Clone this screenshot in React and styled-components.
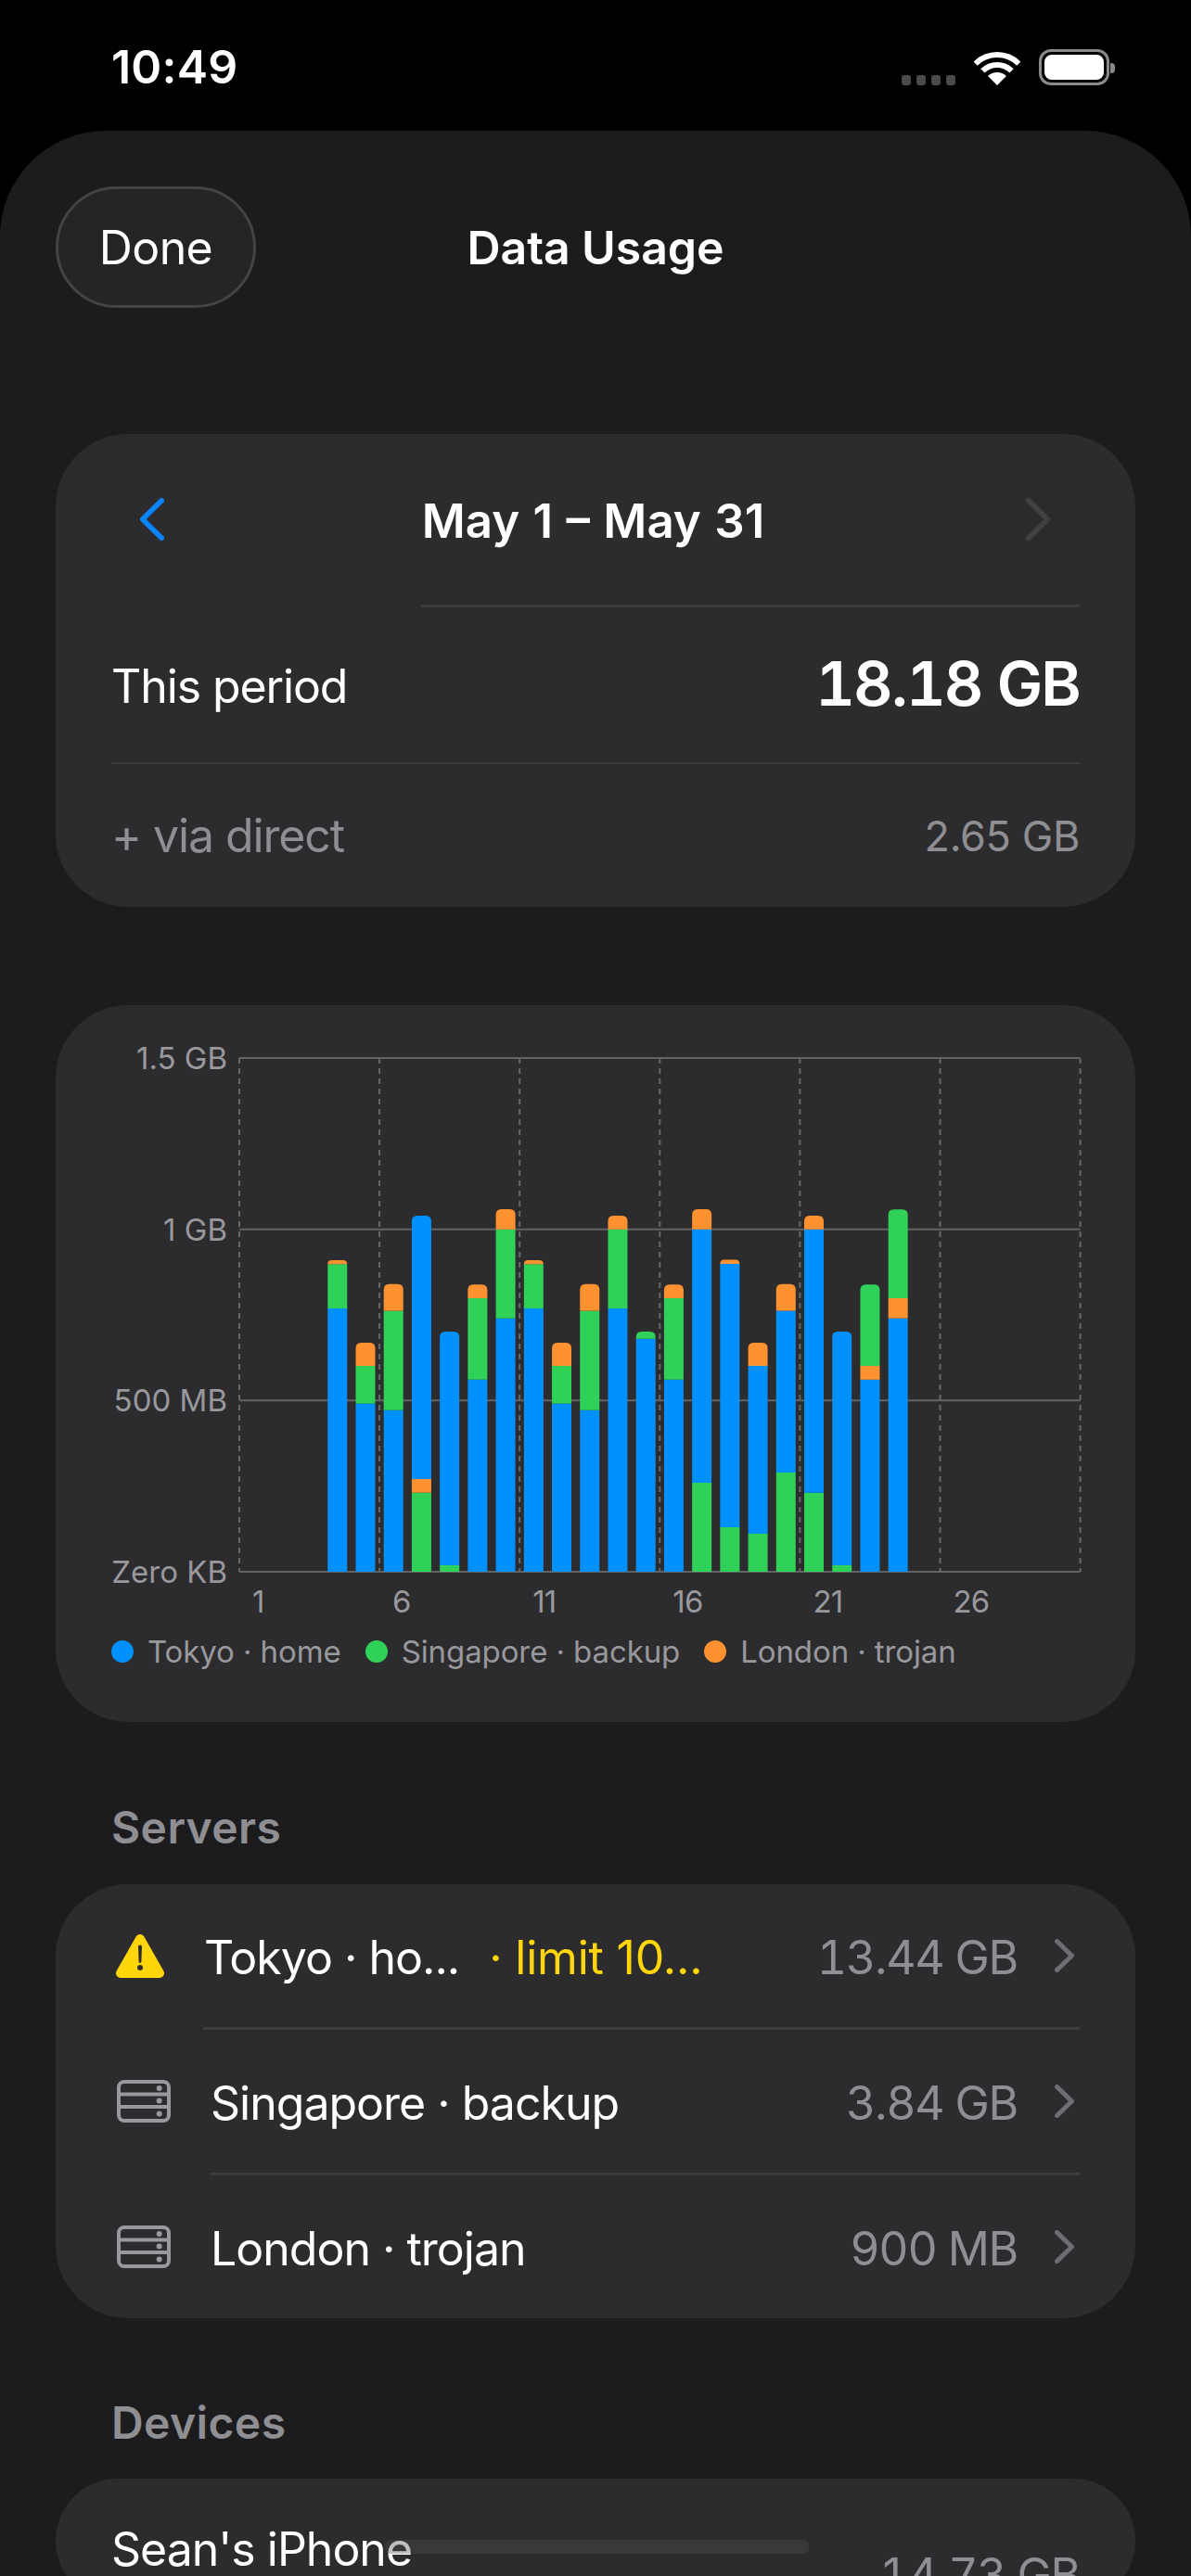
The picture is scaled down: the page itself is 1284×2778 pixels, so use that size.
import React from "react";
import styled, { createGlobalStyle } from "styled-components";

const BLUE = "#0091ff";
const GREEN = "#30d158";
const ORANGE = "#ff9230";

// MB per day, bottom of the stack first
const B = (mb) => [BLUE, mb];
const G = (mb) => [GREEN, mb];
const O = (mb) => [ORANGE, mb];

const days = [
  [B(769), G(129), O(12)],
  [B(491), G(110), O(68)],
  [B(472), G(290), O(78)],
  [G(231), O(40), B(769)],
  [G(19), B(682)],
  [B(561), G(238), O(40)],
  [B(740), G(260), O(59)],
  [B(769), G(129), O(12)],
  [B(491), G(110), O(68)],
  [B(472), G(290), O(78)],
  [B(769), G(231), O(40)],
  [B(680), G(21)],
  [B(561), G(238), O(40)],
  [G(260), B(740), O(59)],
  [G(130), B(769), O(12)],
  [G(111), B(490), O(68)],
  [G(290), B(472), O(78)],
  [G(231), B(769), O(40)],
  [G(19), B(682)],
  [B(561), O(40), G(238)],
  [B(740), O(59), G(259)],
];

const PLOT_W = 906.6;
const PLOT_H = 554;
const COL = PLOT_W / 6;
const STEP = COL / 5;
const BAR_W = 21;
const PX_PER_MB = PLOT_H / 1500;

function topRounded(x, y, w, h, r) {
  const rr = Math.min(r, h);
  return `M${x} ${y + h}V${y + rr}Q${x} ${y} ${x + rr} ${y}H${x + w - rr}Q${x + w} ${y} ${x + w} ${y + rr}V${y + h}Z`;
}

function Chart() {
  const bars = [];
  days.forEach((stack, d) => {
    const x = (d + 3.5) * STEP - BAR_W / 2;
    let y = PLOT_H;
    stack.forEach(([color, mb], i) => {
      const h = mb * PX_PER_MB;
      y -= h;
      const last = i === stack.length - 1;
      bars.push(
        <path
          key={d + "-" + i}
          fill={color}
          d={last ? topRounded(x, y, BAR_W, h, 6) : `M${x} ${y}h${BAR_W}v${h}h${-BAR_W}Z`}
        />
      );
    });
  });

  return (
    <Plot width={PLOT_W} height={PLOT_H} viewBox={`0 0 ${PLOT_W} ${PLOT_H}`}>
      {[0, 1, 2, 3, 4, 5, 6].map((i) => (
        <line key={i} x1={i * COL} x2={i * COL} y1="0" y2={PLOT_H} stroke="#68686b" strokeWidth="2" strokeDasharray="6 5" />
      ))}
      {[0, 1, 2, 3].map((i) => (
        <line key={i} x1="0" x2={PLOT_W} y1={(i * PLOT_H) / 3} y2={(i * PLOT_H) / 3} stroke="#636365" strokeWidth="2" />
      ))}
      {bars}
    </Plot>
  );
}

function Chevron({ dir = "right", w, h, color, sw }) {
  const pts = dir === "right"
    ? `${sw / 2},${sw / 2} ${w - sw / 2},${h / 2} ${sw / 2},${h - sw / 2}`
    : `${w - sw / 2},${sw / 2} ${sw / 2},${h / 2} ${w - sw / 2},${h - sw / 2}`;
  return (
    <svg width={w} height={h} viewBox={`0 0 ${w} ${h}`}>
      <polyline points={pts} fill="none" stroke={color} strokeWidth={sw} strokeLinecap="round" strokeLinejoin="round" />
    </svg>
  );
}

function ServerIcon() {
  return (
    <svg width="58" height="46" viewBox="0 0 58 46">
      <rect x="2" y="2" width="54" height="42" rx="6" fill="none" stroke="#98989d" strokeWidth="4" />
      <path d="M2 15.5H56M2 29H56" stroke="#98989d" strokeWidth="4" />
      <circle cx="45.7" cy="9" r="3" fill="#98989d" />
      <circle cx="45.7" cy="22.5" r="3" fill="#98989d" />
      <circle cx="45.7" cy="36.5" r="3" fill="#98989d" />
    </svg>
  );
}

function WarningIcon() {
  return (
    <svg width="52" height="47" viewBox="0 0 52 47">
      <polygon points="26,5 47,42 5,42" fill="#ffd60a" stroke="#ffd60a" strokeWidth="10" strokeLinejoin="round" />
      <path d="M24 13.5a2 2 0 0 1 4 0l-.6 16a1.4 1.4 0 0 1-2.8 0z" fill="#2c2c2e" />
      <circle cx="26" cy="36" r="3" fill="#2c2c2e" />
    </svg>
  );
}

function WifiIcon() {
  return (
    <svg width="50" height="36" viewBox="0 0 50 36">
      <path d="M1.7 12.7A33 33 0 0 1 48.3 12.7" fill="none" stroke="#fff" strokeWidth="6" />
      <path d="M9.4 20.4A22 22 0 0 1 40.6 20.4" fill="none" stroke="#fff" strokeWidth="6" />
      <path d="M25 36L15.1 26.1A14 14 0 0 1 34.9 26.1Z" fill="#fff" />
    </svg>
  );
}

const serverRows = [
  { name: "Singapore · backup", value: "3.84 GB" },
  { name: "London · trojan", value: "900 MB" },
];

export default function App() {
  return (
    <>
      <GlobalStyle />
      <Page>
        <StatusBar>
          <Time>10:49</Time>
          <StatusIcons>
            <Cells>
              <Cell />
              <Cell />
              <Cell />
              <Cell />
            </Cells>
            <WifiIcon />
            <Battery>
              <BatteryFill />
            </Battery>
            <BatteryNub />
          </StatusIcons>
        </StatusBar>

        <Sheet>
          <NavBar>
            <DoneButton>Done</DoneButton>
            <Title>Data Usage</Title>
          </NavBar>

          <PeriodCard>
            <PeriodNav>
              <Chevron dir="left" w={26} h={46} color="#0a84ff" sw={5.5} />
              <PeriodTitle>May 1 – May 31</PeriodTitle>
              <Chevron w={26} h={46} color="#414143" sw={5.5} />
            </PeriodNav>
            <Divider $inset={394} />
            <TotalRow>
              <TotalLabel>This period</TotalLabel>
              <TotalValue>18.18 GB</TotalValue>
            </TotalRow>
            <Divider $inset={60} />
            <DirectRow>
              <DirectLabel>+ via direct</DirectLabel>
              <DirectValue>2.65 GB</DirectValue>
            </DirectRow>
          </PeriodCard>

          <ChartCard>
            <ChartBody>
              <YLabels>
                <YLabel>1.5 GB</YLabel>
                <YLabel>1 GB</YLabel>
                <YLabel>500 MB</YLabel>
                <YLabel>Zero KB</YLabel>
              </YLabels>
              <Chart />
            </ChartBody>
            <XLabels>
              {[1, 6, 11, 16, 21, 26].map((d) => (
                <XLabel key={d}>{d}</XLabel>
              ))}
            </XLabels>
            <Legend>
              <LegendItem>
                <Dot $color={BLUE} />
                Tokyo · home
              </LegendItem>
              <LegendItem>
                <Dot $color={GREEN} />
                Singapore · backup
              </LegendItem>
              <LegendItem>
                <Dot $color={ORANGE} />
                London · trojan
              </LegendItem>
            </Legend>
          </ChartCard>

          <SectionHeader>Servers</SectionHeader>
          <ListCard>
            <ServerRow>
              <WarningSlot>
                <WarningIcon />
              </WarningSlot>
              <ServerName>Tokyo · ho...</ServerName>
              <LimitNote>· limit 10...</LimitNote>
              <ServerValue>13.44 GB</ServerValue>
              <Chevron w={21} h={36} color="#6e6e72" sw={5} />
            </ServerRow>
            <Divider $inset={159} />
            {serverRows.map((r, i) => (
              <React.Fragment key={r.name}>
                <ServerRow>
                  <ServerSlot>
                    <ServerIcon />
                  </ServerSlot>
                  <ServerName>{r.name}</ServerName>
                  <ServerValue>{r.value}</ServerValue>
                  <Chevron w={21} h={36} color="#6e6e72" sw={5} />
                </ServerRow>
                {i === 0 && <Divider $inset={167} />}
              </React.Fragment>
            ))}
          </ListCard>

          <SectionHeader $devices>Devices</SectionHeader>
          <DeviceCard>
            <DeviceName>Sean's iPhone</DeviceName>
            <DeviceBar />
            <DeviceValue>14.73 GB</DeviceValue>
          </DeviceCard>
        </Sheet>
      </Page>
    </>
  );
}

const GlobalStyle = createGlobalStyle`
  html, body {
    margin: 0;
    padding: 0;
    background: #000;
    font-family: Inter, "Liberation Sans", sans-serif;
    color: #fff;
  }
  * {
    box-sizing: border-box;
  }
`;

const Page = styled.div`
  width: 1284px;
  height: 2778px;
  overflow: hidden;
  display: flex;
  flex-direction: column;
`;

const StatusBar = styled.div`
  height: 141px;
  flex-shrink: 0;
  display: flex;
  justify-content: space-between;
  align-items: flex-start;
  padding: 42px 82px 0 120px;
`;

const Time = styled.div`
  font-size: 50px;
  font-weight: 600;
  line-height: 60px;
  letter-spacing: 0.2px;
`;

const StatusIcons = styled.div`
  display: flex;
  align-items: flex-end;
  padding-top: 11px;
  height: 50px;
  svg {
    margin: 0 20px 0 20px;
  }
`;

const Cells = styled.div`
  display: flex;
  gap: 6px;
  margin-bottom: 0;
`;

const Cell = styled.div`
  width: 10px;
  height: 11px;
  border-radius: 3px;
  background: #4a4a4a;
`;

const Battery = styled.div`
  width: 76px;
  height: 39px;
  border: 3px solid #8a8a8a;
  border-radius: 13px;
  padding: 3px;
`;

const BatteryFill = styled.div`
  height: 100%;
  background: #fff;
  border-radius: 8px;
`;

const BatteryNub = styled.div`
  width: 5px;
  height: 11px;
  margin-left: 1px;
  margin-bottom: 13px;
  background: #8a8a8a;
  border-radius: 0 4px 4px 0;
`;

const Sheet = styled.div`
  flex: 1;
  background: #1c1c1e;
  border-radius: 114px 114px 0 0;
  padding: 60px 60px 0;
  display: flex;
  flex-direction: column;
`;

const NavBar = styled.div`
  display: grid;
  grid-template-columns: 216px 1fr 216px;
  align-items: center;
  height: 131px;
  flex-shrink: 0;
`;

const DoneButton = styled.div`
  height: 131px;
  border-radius: 66px;
  background: #252527;
  border: 3px solid #444446;
  display: flex;
  align-items: center;
  justify-content: center;
  font-size: 50px;
  letter-spacing: -0.6px;
`;

const Title = styled.div`
  text-align: center;
  font-size: 50px;
  font-weight: 600;
  letter-spacing: -0.1px;
`;

const Card = styled.div`
  background: #2c2c2e;
  border-radius: 78px;
  flex-shrink: 0;
`;

const PeriodCard = styled(Card)`
  margin-top: 136px;
  height: 510px;
  display: flex;
  flex-direction: column;
`;

const PeriodNav = styled.div`
  height: 184px;
  display: flex;
  align-items: center;
  justify-content: space-between;
  padding: 0 92px 0 91px;
`;

const PeriodTitle = styled.div`
  font-size: 51px;
  font-weight: 600;
  word-spacing: 1.5px;
  margin: 3px 0 0 -4px;
`;

const Divider = styled.div`
  height: 2.5px;
  flex-shrink: 0;
  background: #3d3d3f;
  margin: 0 60px 0 ${(p) => p.$inset}px;
`;

const TotalRow = styled.div`
  height: 167px;
  display: flex;
  align-items: center;
  justify-content: space-between;
  padding: 0 60px;
`;

const TotalLabel = styled.div`
  font-size: 50px;
  letter-spacing: -1.1px;
  margin-top: 3px;
`;

const TotalValue = styled.div`
  font-size: 66px;
  font-weight: 600;
  letter-spacing: -1.8px;
  font-variant-numeric: tabular-nums;
  margin-bottom: 2px;
`;

const DirectRow = styled.div`
  flex: 1;
  display: flex;
  align-items: center;
  justify-content: space-between;
  padding: 0 60px 0 60px;
`;

const DirectLabel = styled.div`
  font-size: 50px;
  letter-spacing: -1.1px;
  color: #8e8e93;
`;

const DirectValue = styled.div`
  font-size: 45px;
  letter-spacing: -0.4px;
  color: #8e8e93;
`;

const ChartCard = styled(Card)`
  margin-top: 106px;
  height: 773px;
  padding-top: 57px;
`;

const ChartBody = styled.div`
  display: flex;
  padding-left: 0;
`;

const YLabels = styled.div`
  width: 185px;
  margin-right: 13px;
  height: 554px;
  display: flex;
  flex-direction: column;
  justify-content: space-between;
  align-items: flex-end;
`;

const YLabel = styled.div`
  height: 40px;
  margin: -20px 0;
  line-height: 40px;
  font-size: 33px;
  color: #98989d;
  white-space: nowrap;
`;

const Plot = styled.svg`
  display: block;
  flex-shrink: 0;
  overflow: visible;
`;

const XLabels = styled.div`
  display: grid;
  grid-template-columns: repeat(6, ${COL}px);
  margin: 12px 0 0 198px;
`;

const XLabel = styled.div`
  padding-left: 14px;
  font-size: 33px;
  line-height: 40px;
  letter-spacing: -0.8px;
  color: #98989d;
`;

const Legend = styled.div`
  display: flex;
  gap: 26px;
  margin: 14px 0 0 60px;
`;

const LegendItem = styled.div`
  display: flex;
  align-items: center;
  gap: 15px;
  font-size: 33px;
  line-height: 40px;
  letter-spacing: -0.1px;
  color: #98989d;
`;

const Dot = styled.span`
  width: 24px;
  height: 24px;
  border-radius: 50%;
  background: ${(p) => p.$color};
`;

const SectionHeader = styled.div`
  flex-shrink: 0;
  height: 60px;
  line-height: 60px;
  margin: ${(p) => (p.$devices ? "83px" : "84px")} 0 ${(p) => (p.$devices ? "30px" : "31px")} 60px;
  font-size: 48px;
  font-weight: 600;
  color: #8e8e93;
  letter-spacing: 0.4px;
`;

const ListCard = styled(Card)`
  height: 468px;
  display: flex;
  flex-direction: column;
`;

const ServerRow = styled.div`
  flex: 1;
  display: flex;
  align-items: center;
  padding: 0 66px 0 65px;
`;

const WarningSlot = styled.div`
  display: flex;
  width: 95px;
  flex-shrink: 0;
`;

const ServerSlot = styled.div`
  display: flex;
  margin-left: 1px;
  width: 101px;
  flex-shrink: 0;
`;

const ServerName = styled.div`
  font-size: 50px;
  letter-spacing: -1px;
  white-space: nowrap;
  margin-top: 4px;
`;

const LimitNote = styled.div`
  font-size: 50px;
  letter-spacing: -0.2px;
  color: #ffd60a;
  margin: 4px 0 0 32px;
  white-space: nowrap;
`;

const ServerValue = styled.div`
  margin: 4px 40px 0 auto;
  font-size: 50px;
  letter-spacing: -1.3px;
  font-variant-numeric: tabular-nums;
  color: #8e8e93;
  white-space: nowrap;
`;

const DeviceCard = styled(Card)`
  flex: 1;
  position: relative;
  padding: 50px 60px 0;
  display: flex;
  justify-content: space-between;
  align-items: flex-start;
`;

const DeviceName = styled.div`
  font-size: 50px;
  letter-spacing: -1px;
  line-height: 52px;
`;

const DeviceBar = styled.div`
  position: absolute;
  left: 355px;
  top: 66px;
  width: 457px;
  height: 15px;
  border-radius: 6px;
  background: rgba(80, 80, 82, 0.36);
`;

const DeviceValue = styled.div`
  margin-top: 24px;
  font-size: 50px;
  letter-spacing: -1.3px;
  font-variant-numeric: tabular-nums;
  line-height: 60px;
  color: #8e8e93;
`;
